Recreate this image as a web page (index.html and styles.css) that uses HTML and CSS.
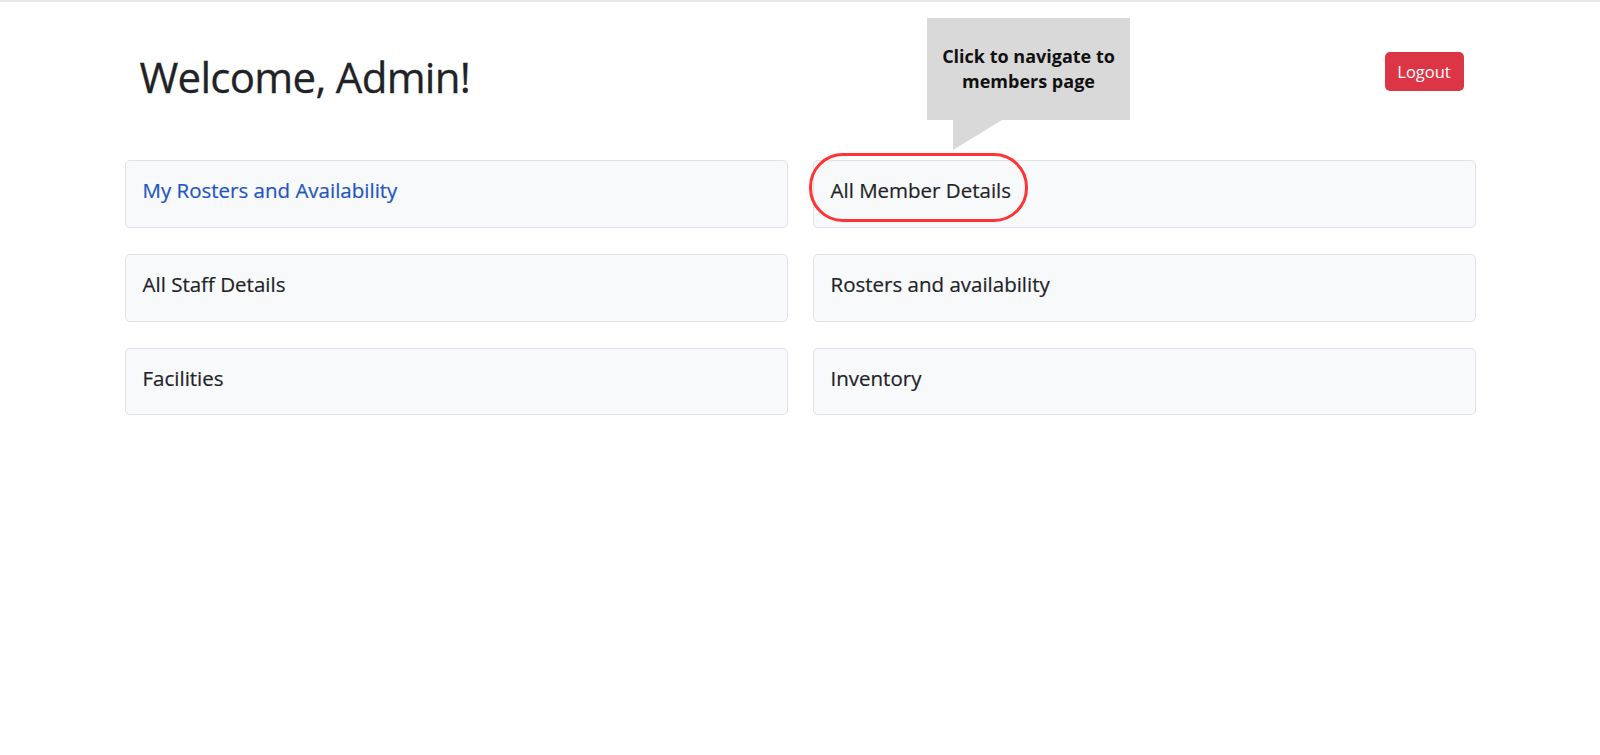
FILE: index.html
```html
<!DOCTYPE html>
<html lang="en">
<head>
<meta charset="utf-8">
<title>Admin Dashboard</title>
<link rel="stylesheet" href="styles.css">
</head>
<body>
<div class="topline"></div>
<main class="page">
  <header class="header">
    <h1 class="title">Welcome, Admin!</h1>
    <button class="logout">Logout</button>
  </header>
  <section class="grid">
    <div class="card"><h5 class="card-title link">My Rosters and Availability</h5></div>
    <div class="card"><h5 class="card-title">All Member Details</h5></div>
    <div class="card"><h5 class="card-title">All Staff Details</h5></div>
    <div class="card"><h5 class="card-title">Rosters and availability</h5></div>
    <div class="card"><h5 class="card-title">Facilities</h5></div>
    <div class="card"><h5 class="card-title">Inventory</h5></div>
  </section>
</main>
<div class="tip">Click to navigate to<br>members page</div>
<div class="highlight"></div>
</body>
</html>
```
FILE: styles.css
```css
html, body {
  margin: 0;
  padding: 0;
  background: #ffffff;
}
body {
  font-family: "Open Sans", "Noto Sans", sans-serif;
  color: #212529;
}
.topline {
  height: 2px;
  background: #e8e8e8;
}
.page {
  max-width: 1351px;
  margin: 0 auto;
}
.header {
  display: flex;
  justify-content: space-between;
  align-items: flex-start;
  margin-top: 50px;
  padding: 0 12px 0 15px;
}
.title {
  margin: 0;
  font-size: 42px;
  line-height: 1.2;
  font-weight: 500;
  letter-spacing: -0.7px;
  color: #1f2327;
  -webkit-text-stroke: 0.3px #1f2327;
}
.logout {
  font-family: "Open Sans", sans-serif;
  background: #dc3545;
  color: #ffffff;
  border: none;
  border-radius: 5px;
  font-size: 16.5px;
  line-height: 25px;
  padding: 7px 12px;
  width: 79px;
  height: 39px;
}
.grid {
  display: grid;
  grid-template-columns: 1fr 1fr;
  column-gap: 25px;
  row-gap: 26px;
  margin-top: 58px;
}
.card {
  background: #f8f9fa;
  border: 1px solid #dfe2e6;
  border-radius: 5px;
  padding: 17px 17px 16px;
}
.card-title {
  margin: 0 0 8px 0;
  font-size: 20.5px;
  line-height: 1.2;
  font-weight: 500;
  color: #1f2327;
  -webkit-text-stroke: 0.2px #1f2327;
}
.card-title.link {
  color: #1f56bf;
  -webkit-text-stroke: 0.2px #1f56bf;
}
.tip {
  position: absolute;
  left: 927px;
  top: 18px;
  width: 203px;
  height: 102px;
  background: #d9d9d9;
  display: flex;
  align-items: center;
  justify-content: center;
  text-align: center;
  font-family: "Open Sans", sans-serif;
  font-weight: 700;
  font-size: 18px;
  line-height: 25px;
  color: #111111;
}
.tip::after {
  content: "";
  position: absolute;
  left: 26px;
  top: 102px;
  width: 0;
  height: 0;
  border-top: 30px solid #d9d9d9;
  border-right: 49px solid transparent;
}
.highlight {
  position: absolute;
  left: 809px;
  top: 152.5px;
  width: 219px;
  height: 69px;
  box-sizing: border-box;
  border: 3px solid #ff3333;
  border-radius: 34px;
}
```
